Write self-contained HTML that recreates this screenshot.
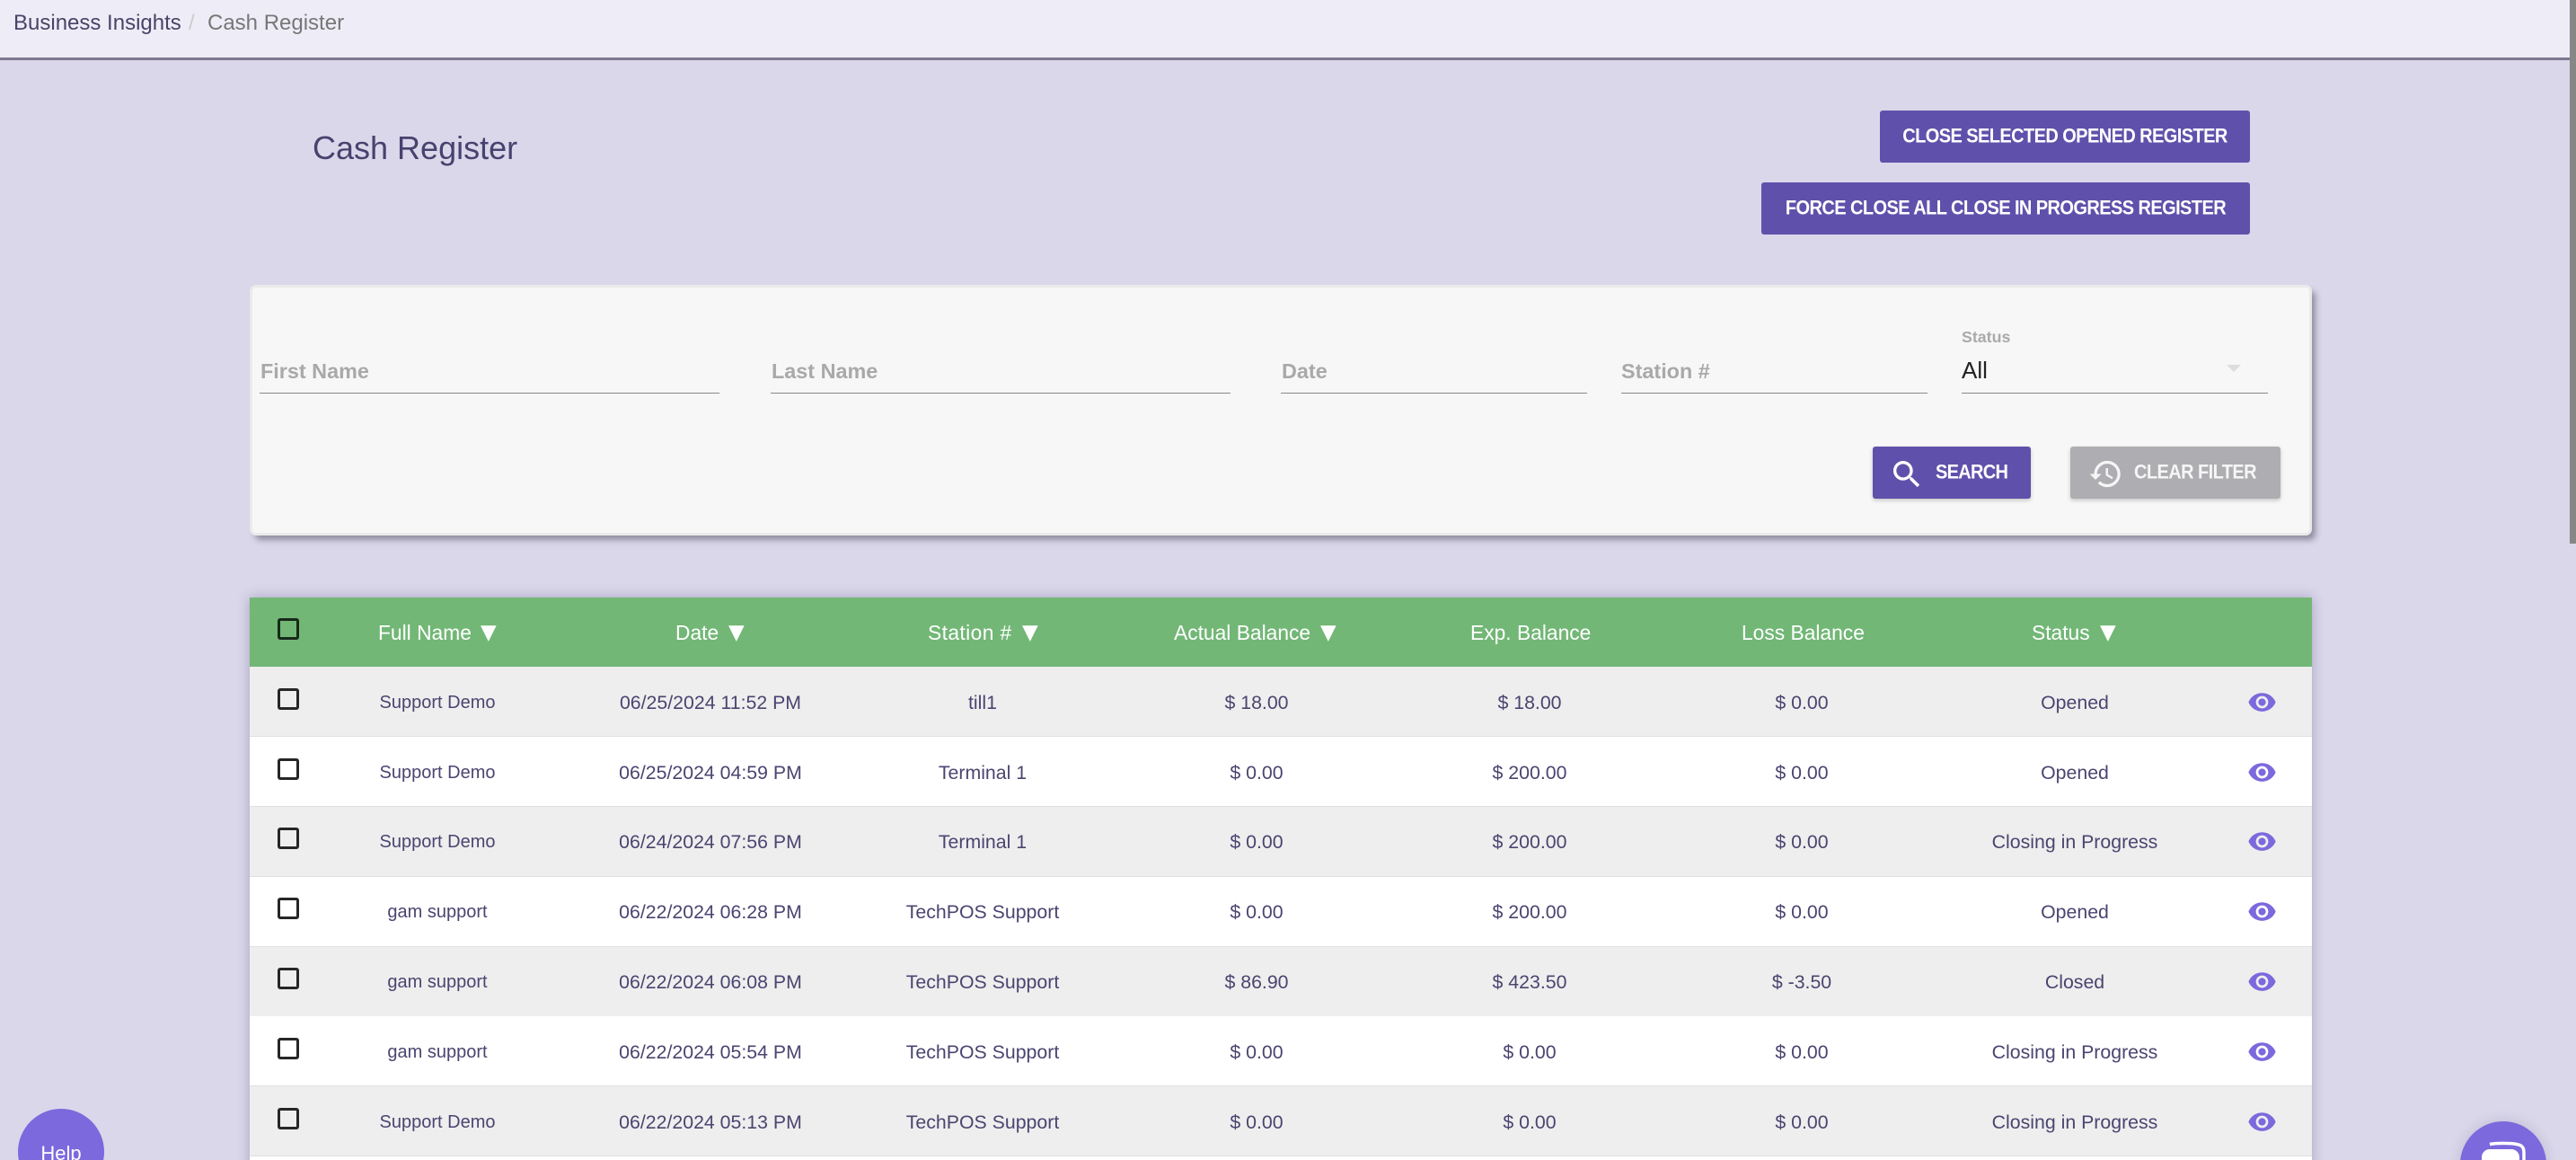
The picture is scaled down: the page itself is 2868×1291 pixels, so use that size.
<!DOCTYPE html>
<html>
<head>
<meta charset="utf-8">
<title>Cash Register</title>
<style>
html,body{margin:0;padding:0;width:2868px;height:1291px;overflow:hidden;background:#DAD7EA;font-family:"Liberation Sans",sans-serif;}
*{box-sizing:border-box;}
#page{position:absolute;left:0;top:0;width:2868px;height:1291px;overflow:hidden;background:#DAD7EA;contain:strict;}
.a{position:absolute;white-space:nowrap;line-height:30px;}
#top{position:absolute;left:0;top:0;width:2861px;height:67px;background:#EEEDF7;border-bottom:3px solid #7F7890;}
#sb{position:absolute;left:2861px;top:0;width:7px;height:605px;background:#878787;}
.btn{position:absolute;background:#5F51AB;color:#fff;font-weight:bold;font-size:20px;letter-spacing:-.58px;border-radius:3px;display:flex;align-items:center;justify-content:center;white-space:nowrap;}
.btn b{display:inline-block;transform:scaleY(1.1);}
#card{position:absolute;left:278px;top:317px;width:2296px;height:279px;background:#F7F7F7;border:3px solid #EAEAEA;border-radius:7px;box-shadow:5px 6px 7px -1px rgba(40,40,60,.42);}
.ph{position:absolute;top:398px;font-size:23.4px;font-weight:bold;color:#A9A9A9;line-height:30px;white-space:nowrap;}
.ul{position:absolute;top:437px;height:1px;background:#8A8A8A;}
.sbtn{position:absolute;top:497px;height:58px;border-radius:3px;box-shadow:0 2px 5px rgba(0,0,0,.2);}
#tbl{position:absolute;left:278px;top:665px;width:2296px;height:640px;background:#fff;box-shadow:0 0 13px rgba(60,50,100,.32);}
#thead{position:absolute;left:278px;top:665px;width:2296px;height:77px;background:#72B776;}
.th{position:absolute;top:689px;font-size:22.8px;color:#fff;line-height:30px;white-space:nowrap;}
.tri{position:absolute;top:689px;font-family:"DejaVu Sans",sans-serif;font-size:23px;color:#fff;line-height:30px;}
.r{position:absolute;left:278px;width:2296px;border-bottom:1px solid #E0E0E0;color:#4A4570;}
.o{background:#EEEEEE;}
.e{background:#fff;}
.r span{position:absolute;top:25px;font-size:21.3px;line-height:30px;white-space:nowrap;transform:translateX(-50%);}
.r span.n{left:209px;font-size:20px;}
.r span.d{left:513px;}
.r span.s{left:816px;}
.r span.ab{left:1121px;}
.r span.ex{left:1425px;}
.r span.lo{left:1728px;}
.r span.st{left:2032px;}
.cb{position:absolute;left:31px;top:24px;width:24px;height:24px;border:3px solid #262626;border-radius:3px;}
.eye{position:absolute;left:2223.5px;top:23px;width:33px;height:33px;fill:#7B69DD;}
.u span{top:24px;}
.u .cb{top:23px;}
.u .eye{top:22px;}
</style>
</head>
<body>
<div id="page">
<div id="top"></div>
<div id="sb"></div>

<div class="a" style="left:15px;top:11px;font-size:24px;color:#4A4368;">Business Insights</div>
<div class="a" style="left:210px;top:11px;font-size:24px;color:#CCCCCC;">/</div>
<div class="a" style="left:231px;top:11px;font-size:24px;color:#777777;">Cash Register</div>

<div class="a" style="left:348px;top:145px;font-size:36px;line-height:40px;color:#47426E;">Cash Register</div>

<div class="btn" style="left:2093px;top:123px;width:412px;height:58px;"><b>CLOSE SELECTED OPENED REGISTER</b></div>
<div class="btn" style="left:1961px;top:203px;width:544px;height:58px;"><b>FORCE CLOSE ALL CLOSE IN PROGRESS REGISTER</b></div>

<div id="card"></div>
<div class="ph" style="left:290px;">First Name</div>
<div class="ul" style="left:289px;width:512px;"></div>
<div class="ph" style="left:859px;">Last Name</div>
<div class="ul" style="left:858px;width:512px;"></div>
<div class="ph" style="left:1427px;">Date</div>
<div class="ul" style="left:1426px;width:341px;"></div>
<div class="ph" style="left:1805px;">Station #</div>
<div class="ul" style="left:1805px;width:341px;"></div>
<div class="a" style="left:2184px;top:360px;font-size:17.8px;font-weight:bold;color:#AAAAAA;">Status</div>
<div class="a" style="left:2184px;top:397px;font-size:26px;color:#222222;">All</div>
<div style="position:absolute;left:2479px;top:406px;width:0;height:0;border-left:8.5px solid transparent;border-right:8.5px solid transparent;border-top:8px solid #DDDDDD;"></div>
<div class="ul" style="left:2184px;width:341px;"></div>

<div class="sbtn" style="left:2085px;width:176px;background:#5F51AB;"></div>
<svg style="position:absolute;left:2103px;top:508px;width:40px;height:40px;fill:#fff;" viewBox="0 0 24 24"><path d="M15.5 14h-.79l-.28-.27C15.41 12.59 16 11.11 16 9.5 16 5.91 13.09 3 9.5 3S3 5.91 3 9.5 5.91 16 9.5 16c1.61 0 3.09-.59 4.23-1.57l.27.28v.79l5 4.99L20.49 19l-4.99-5zm-6 0C7.01 14 5 11.99 5 9.5S7.01 5 9.5 5 14 7.01 14 9.5 11.99 14 9.5 14z"/></svg>
<div class="a" style="left:2155px;top:511px;font-size:20px;font-weight:bold;letter-spacing:-.7px;color:#fff;transform:scaleY(1.1);">SEARCH</div>

<div class="sbtn" style="left:2305px;width:234px;background:#AEADB1;"></div>
<svg style="position:absolute;left:2325px;top:508px;width:39px;height:39px;fill:#F6F6F6;" viewBox="0 0 24 24"><path d="M13 3c-4.97 0-9 4.03-9 9H1l3.89 3.89.07.14L9 12H6c0-3.87 3.13-7 7-7s7 3.13 7 7-3.13 7-7 7c-1.93 0-3.68-.79-4.94-2.06l-1.42 1.42C8.27 19.99 10.51 21 13 21c4.97 0 9-4.03 9-9s-4.03-9-9-9zm-1 5v5l4.28 2.54.72-1.21-3.5-2.08V8H12z"/></svg>
<div class="a" style="left:2376px;top:511px;font-size:20px;font-weight:bold;letter-spacing:-.58px;color:#F6F6F6;transform:scaleY(1.1);">CLEAR FILTER</div>

<div id="tbl"></div>
<div id="thead"></div>
<div style="position:absolute;left:309px;top:688px;width:24px;height:24px;border:3px solid #17291A;border-radius:3px;"></div>
<div class="th" style="left:421px;">Full Name</div><div class="tri" style="left:535px;">▼</div>
<div class="th" style="left:752px;">Date</div><div class="tri" style="left:811px;">▼</div>
<div class="th" style="left:1033px;letter-spacing:.4px;">Station #</div><div class="tri" style="left:1138px;">▼</div>
<div class="th" style="left:1307px;">Actual Balance</div><div class="tri" style="left:1470px;">▼</div>
<div class="th" style="left:1637px;">Exp. Balance</div>
<div class="th" style="left:1939px;">Loss Balance</div>
<div class="th" style="left:2262px;">Status</div><div class="tri" style="left:2338px;">▼</div>

<div class="r o" style="top:742px;height:78px;"><i class="cb"></i><span class="n">Support Demo</span><span class="d">06/25/2024 11:52 PM</span><span class="s">till1</span><span class="ab">$ 18.00</span><span class="ex">$ 18.00</span><span class="lo">$ 0.00</span><span class="st">Opened</span><svg class="eye" viewBox="0 0 24 24"><path d="M12 4.5C7 4.5 2.73 7.61 1 12c1.73 4.39 6 7.5 11 7.5s9.27-3.11 11-7.5c-1.73-4.39-6-7.5-11-7.5zM12 17c-2.76 0-5-2.24-5-5s2.24-5 5-5 5 2.24 5 5-2.24 5-5 5zm0-8c-1.66 0-3 1.34-3 3s1.34 3 3 3 3-1.34 3-3-1.34-3-3-3z"/></svg></div>

<div class="r e" style="top:820px;height:78px;"><i class="cb"></i><span class="n">Support Demo</span><span class="d">06/25/2024 04:59 PM</span><span class="s">Terminal 1</span><span class="ab">$ 0.00</span><span class="ex">$ 200.00</span><span class="lo">$ 0.00</span><span class="st">Opened</span><svg class="eye" viewBox="0 0 24 24"><path d="M12 4.5C7 4.5 2.73 7.61 1 12c1.73 4.39 6 7.5 11 7.5s9.27-3.11 11-7.5c-1.73-4.39-6-7.5-11-7.5zM12 17c-2.76 0-5-2.24-5-5s2.24-5 5-5 5 2.24 5 5-2.24 5-5 5zm0-8c-1.66 0-3 1.34-3 3s1.34 3 3 3 3-1.34 3-3-1.34-3-3-3z"/></svg></div>

<div class="r o u" style="top:898px;height:78px;"><i class="cb"></i><span class="n">Support Demo</span><span class="d">06/24/2024 07:56 PM</span><span class="s">Terminal 1</span><span class="ab">$ 0.00</span><span class="ex">$ 200.00</span><span class="lo">$ 0.00</span><span class="st">Closing in Progress</span><svg class="eye" viewBox="0 0 24 24"><path d="M12 4.5C7 4.5 2.73 7.61 1 12c1.73 4.39 6 7.5 11 7.5s9.27-3.11 11-7.5c-1.73-4.39-6-7.5-11-7.5zM12 17c-2.76 0-5-2.24-5-5s2.24-5 5-5 5 2.24 5 5-2.24 5-5 5zm0-8c-1.66 0-3 1.34-3 3s1.34 3 3 3 3-1.34 3-3-1.34-3-3-3z"/></svg></div>

<div class="r e u" style="top:976px;height:78px;"><i class="cb"></i><span class="n">gam support</span><span class="d">06/22/2024 06:28 PM</span><span class="s">TechPOS Support</span><span class="ab">$ 0.00</span><span class="ex">$ 200.00</span><span class="lo">$ 0.00</span><span class="st">Opened</span><svg class="eye" viewBox="0 0 24 24"><path d="M12 4.5C7 4.5 2.73 7.61 1 12c1.73 4.39 6 7.5 11 7.5s9.27-3.11 11-7.5c-1.73-4.39-6-7.5-11-7.5zM12 17c-2.76 0-5-2.24-5-5s2.24-5 5-5 5 2.24 5 5-2.24 5-5 5zm0-8c-1.66 0-3 1.34-3 3s1.34 3 3 3 3-1.34 3-3-1.34-3-3-3z"/></svg></div>

<div class="r o u" style="top:1054px;height:78px;"><i class="cb"></i><span class="n">gam support</span><span class="d">06/22/2024 06:08 PM</span><span class="s">TechPOS Support</span><span class="ab">$ 86.90</span><span class="ex">$ 423.50</span><span class="lo">$ -3.50</span><span class="st">Closed</span><svg class="eye" viewBox="0 0 24 24"><path d="M12 4.5C7 4.5 2.73 7.61 1 12c1.73 4.39 6 7.5 11 7.5s9.27-3.11 11-7.5c-1.73-4.39-6-7.5-11-7.5zM12 17c-2.76 0-5-2.24-5-5s2.24-5 5-5 5 2.24 5 5-2.24 5-5 5zm0-8c-1.66 0-3 1.34-3 3s1.34 3 3 3 3-1.34 3-3-1.34-3-3-3z"/></svg></div>

<div class="r e" style="top:1131px;height:78px;"><i class="cb"></i><span class="n">gam support</span><span class="d">06/22/2024 05:54 PM</span><span class="s">TechPOS Support</span><span class="ab">$ 0.00</span><span class="ex">$ 0.00</span><span class="lo">$ 0.00</span><span class="st">Closing in Progress</span><svg class="eye" viewBox="0 0 24 24"><path d="M12 4.5C7 4.5 2.73 7.61 1 12c1.73 4.39 6 7.5 11 7.5s9.27-3.11 11-7.5c-1.73-4.39-6-7.5-11-7.5zM12 17c-2.76 0-5-2.24-5-5s2.24-5 5-5 5 2.24 5 5-2.24 5-5 5zm0-8c-1.66 0-3 1.34-3 3s1.34 3 3 3 3-1.34 3-3-1.34-3-3-3z"/></svg></div>

<div class="r o" style="top:1209px;height:78px;"><i class="cb"></i><span class="n">Support Demo</span><span class="d">06/22/2024 05:13 PM</span><span class="s">TechPOS Support</span><span class="ab">$ 0.00</span><span class="ex">$ 0.00</span><span class="lo">$ 0.00</span><span class="st">Closing in Progress</span><svg class="eye" viewBox="0 0 24 24"><path d="M12 4.5C7 4.5 2.73 7.61 1 12c1.73 4.39 6 7.5 11 7.5s9.27-3.11 11-7.5c-1.73-4.39-6-7.5-11-7.5zM12 17c-2.76 0-5-2.24-5-5s2.24-5 5-5 5 2.24 5 5-2.24 5-5 5zm0-8c-1.66 0-3 1.34-3 3s1.34 3 3 3 3-1.34 3-3-1.34-3-3-3z"/></svg></div>

<div style="position:absolute;left:20px;top:1234px;width:96px;height:96px;border-radius:50%;background:#7B69DD;"></div>
<div class="a" style="left:68px;top:1269px;font-size:22px;color:#fff;transform:translateX(-50%);">Help</div>

<div style="position:absolute;left:2739px;top:1248px;width:96px;height:96px;border-radius:50%;background:#7B69DD;box-shadow:0 0 14px rgba(60,50,100,.18);"></div>
<svg style="position:absolute;left:2755px;top:1265px;width:64px;height:40px;" viewBox="0 0 64 40"><path d="M17 8.5 C24 7 40 7 47 8.5 C53 9.5 55 12 55 18 L55 34" fill="none" stroke="#fff" stroke-width="3.5"/><rect x="8" y="14" width="42" height="40" rx="9" fill="#fff"/></svg>
</div>
</body>
</html>
